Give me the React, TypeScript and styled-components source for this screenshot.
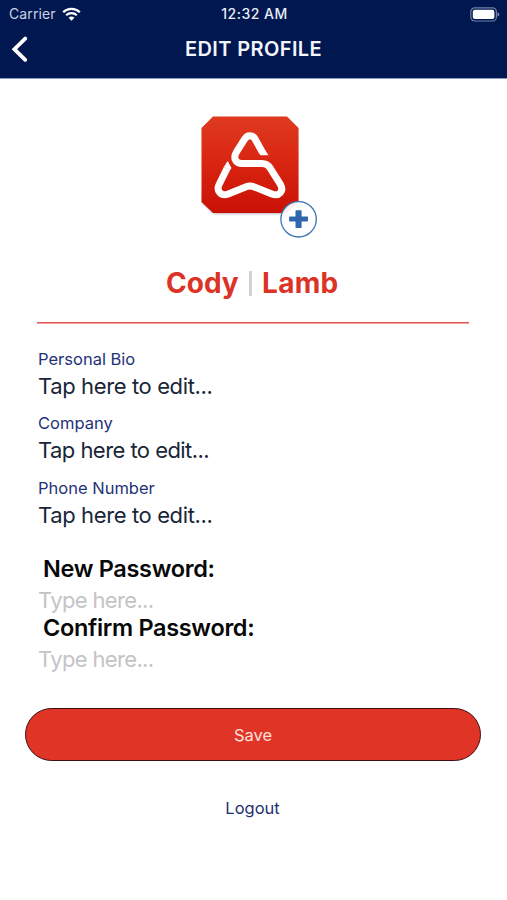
import React from "react";
import styled, { createGlobalStyle } from "styled-components";

const GlobalStyle = createGlobalStyle`
  * { box-sizing: border-box; }
  body { margin: 0; background: #fff; font-family: Inter, "Liberation Sans", sans-serif; }
`;

const Screen = styled.div`
  width: 507px;
  height: 900px;
  overflow: hidden;
  background: #fff;
  display: flex;
  flex-direction: column;
`;

const Header = styled.header`
  height: 79px;
  background: #00184f;
  border-bottom: 1px solid #8d9bc0;
  color: #fff;
`;

const StatusBar = styled.div`
  height: 28px;
  padding: 0 7px 0 9px;
  display: grid;
  grid-template-columns: 1fr auto 1fr;
  align-items: center;
  font-size: 14px;
  line-height: 28px;
`;

const Carrier = styled.div`
  display: flex;
  align-items: center;
  gap: 6px;
  color: #ccd3e3;
  letter-spacing: 0.1px;
`;

const Clock = styled.div`
  font-weight: 500;
  color: #e8ecf5;
  letter-spacing: 0.5px;
`;

const BatterySlot = styled.div`
  display: flex;
  justify-content: flex-end;
`;

const NavBar = styled.div`
  height: 42px;
  padding: 0 11px;
  display: grid;
  grid-template-columns: 1fr auto 1fr;
  align-items: center;
`;

const BackButton = styled.button`
  width: 18px;
  height: 27px;
  padding: 0;
  border: 0;
  background: none;
  display: flex;
`;

const Title = styled.h1`
  margin: 0;
  font-size: 20px;
  line-height: 42px;
  font-weight: 600;
  letter-spacing: 0.4px;
  color: #f3f5fb;
`;

const Avatar = styled.div`
  position: relative;
  width: 98px;
  height: 98px;
  margin: 37px 0 0 201px;
`;

const AddPhoto = styled.button`
  position: absolute;
  left: 79px;
  top: 84px;
  width: 38px;
  height: 38px;
  padding: 0;
  border: 0;
  background: none;
  display: flex;
`;

const NameRow = styled.div`
  height: 40px;
  margin-top: 49px;
  padding-left: 166px;
  display: flex;
  align-items: center;
`;

const Name = styled.span<{ $width: number; $spacing: number }>`
  width: ${(p) => p.$width}px;
  font-size: 28px;
  line-height: 40px;
  font-weight: 700;
  letter-spacing: ${(p) => p.$spacing}px;
  color: #dc3327;
  white-space: nowrap;
`;

const NameDivider = styled.span`
  width: 3px;
  height: 25px;
  margin: 0 10px 0 10px;
  background: #d2d2d2;
`;

const Rule = styled.hr`
  width: 432px;
  height: 2px;
  margin: 19px 0 0 37px;
  border: 0;
  background: linear-gradient(#e0564e 50%, #f0a5a0 50%);
`;

const Fields = styled.div`
  margin: 23px 0 0 38px;
`;

const Field = styled.div`
  height: 64.4px;
`;

const Label = styled.div`
  font-size: 16.5px;
  line-height: 25px;
  color: #1e3378;
`;

const Value = styled.div<{ $spacing: number }>`
  font-size: 22px;
  line-height: 29px;
  letter-spacing: ${(p) => p.$spacing}px;
  color: #182638;
`;

const Passwords = styled.div`
  margin: 12.6px 0 0 38px;
`;

const PasswordField = styled.div`
  height: 59.5px;
`;

const PasswordLabel = styled.div`
  padding-left: 5px;
  font-size: 23.5px;
  line-height: 32px;
  font-weight: 600;
  letter-spacing: -0.33px;
  color: #080808;
`;

const Placeholder = styled.div`
  font-size: 22px;
  line-height: 30px;
  letter-spacing: -0.65px;
  color: #c4c4c6;
`;

const SaveButton = styled.button`
  width: 456px;
  height: 53px;
  margin: 36.4px 0 0 25px;
  padding: 0;
  border: 1.5px solid #3c1013;
  border-radius: 27px;
  background: #e03427;
  color: #fbe0dc;
  font-family: inherit;
  font-size: 16.5px;
`;

const LogoutButton = styled.button`
  align-self: center;
  height: 30px;
  margin: 32px 2px 0 0;
  padding: 0;
  border: 0;
  background: none;
  color: #1e3070;
  font-family: inherit;
  font-size: 16.5px;
`;

const WifiIcon = () => (
  <svg width="19" height="14" viewBox="0 0 19 14" fill="none">
    <path d="M1.2 5.2C5.8.7 13.2.7 17.8 5.2" stroke="#fff" strokeWidth="2.3" />
    <path d="M4.2 8.2c2.9-2.8 7.7-2.8 10.6 0" stroke="#fff" strokeWidth="2.2" />
    <path d="M6.6 10.8c1.6-1.6 4.2-1.6 5.8 0l-2.9 2.9z" fill="#fff" />
  </svg>
);

const BatteryIcon = () => (
  <svg width="30" height="15" viewBox="0 0 30 15">
    <rect x="0.8" y="0.8" width="25.6" height="13.2" rx="4" fill="none" stroke="#7180a7" strokeWidth="1.2" />
    <rect x="2.8" y="2.8" width="21.6" height="9.2" rx="2" fill="#fff" />
    <path d="M27.6 5.2v4.4q1.8-.8 1.8-2.2t-1.8-2.2" fill="#8792b4" />
  </svg>
);

const BackIcon = () => (
  <svg width="18" height="27" viewBox="0 0 18 27" fill="none">
    <path d="M14.2 2.6 3.4 13.2l10.8 10.6" stroke="#fff" strokeWidth="3.8" strokeLinecap="round" strokeLinejoin="miter" />
  </svg>
);

const Logo = () => (
  <svg width="98" height="102" viewBox="0 0 98 102">
    <defs>
      <linearGradient id="tile" x1="0" y1="0" x2="0" y2="1">
        <stop offset="0" stopColor="#df3b20" />
        <stop offset="0.5" stopColor="#d92411" />
        <stop offset="1" stopColor="#c91105" />
      </linearGradient>
      <filter id="shade" x="-10%" y="-10%" width="120%" height="120%">
        <feGaussianBlur stdDeviation="1" />
      </filter>
    </defs>
    <path d="M11 2h75l11 11v74L86 98H13L1 87z" fill="#000" opacity=".28" filter="url(#shade)" />
    <path d="M12 .5h74l11.5 11.5v74L86 97H12L.5 86V12z" fill="url(#tile)" />
    <path
      d="M61.2 36 54.2 23.2C51.8 18.6 46.2 18.6 43.6 23.2L35.4 36.2C31.9 42 34.6 47.6 41.2 47.6H60.8C65.2 47.6 67.6 49.2 69.6 52.8L79.4 68.4C83.4 75.2 77.8 80.8 70.8 78L53.4 71Q49 69.2 44.6 71L27.2 78C20.2 80.8 14.8 75 18.2 68.2L26 52.5"
      fill="none"
      stroke="#fff"
      strokeWidth="7"
      strokeLinejoin="round"
    />
    <path d="M58 36.5 64 33.7 67.5 39.3H59.4z" fill="#fff" />
    <path d="M22.8 51 26.7 45 30.5 52 29 54.2z" fill="#fff" />
  </svg>
);

const PlusIcon = () => (
  <svg width="38" height="38" viewBox="0 0 38 38">
    <circle cx="18.6" cy="19.3" r="17.7" fill="#fff" fillOpacity=".94" stroke="#3d73b4" strokeWidth="1.3" />
    <path
      d="M16.3 10.2h4.5q.8 0 .8.8v5.4h5.6q.8 0 .8.8v3.6q0 .8-.8.8h-5.6v5.6q0 .8-.8.8h-4.5q-.8 0-.8-.8v-5.6H9.9q-.8 0-.8-.8v-3.6q0-.8.8-.8h5.6V11q0-.8.8-.8z"
      fill="#2f66ad"
    />
  </svg>
);

const fields = [
  { label: "Personal Bio", spacing: -0.38 },
  { label: "Company", spacing: -0.55 },
  { label: "Phone Number", spacing: -0.38 },
];

export default function App() {
  return (
    <Screen>
      <GlobalStyle />
      <Header>
        <StatusBar>
          <Carrier>
            Carrier
            <WifiIcon />
          </Carrier>
          <Clock>12:32 AM</Clock>
          <BatterySlot>
            <BatteryIcon />
          </BatterySlot>
        </StatusBar>
        <NavBar>
          <BackButton aria-label="Back">
            <BackIcon />
          </BackButton>
          <Title>EDIT PROFILE</Title>
        </NavBar>
      </Header>
      <Avatar>
        <Logo />
        <AddPhoto aria-label="Change photo">
          <PlusIcon />
        </AddPhoto>
      </Avatar>
      <NameRow>
        <Name $width={73} $spacing={0}>Cody</Name>
        <NameDivider />
        <Name $width={80} $spacing={0.3}>Lamb</Name>
      </NameRow>
      <Rule />
      <Fields>
        {fields.map((f) => (
          <Field key={f.label}>
            <Label>{f.label}</Label>
            <Value $spacing={f.spacing}>Tap here to edit...</Value>
          </Field>
        ))}
      </Fields>
      <Passwords>
        <PasswordField>
          <PasswordLabel>New Password:</PasswordLabel>
          <Placeholder>Type here...</Placeholder>
        </PasswordField>
        <PasswordField>
          <PasswordLabel>Confirm Password:</PasswordLabel>
          <Placeholder>Type here...</Placeholder>
        </PasswordField>
      </Passwords>
      <SaveButton>Save</SaveButton>
      <LogoutButton>Logout</LogoutButton>
    </Screen>
  );
}
